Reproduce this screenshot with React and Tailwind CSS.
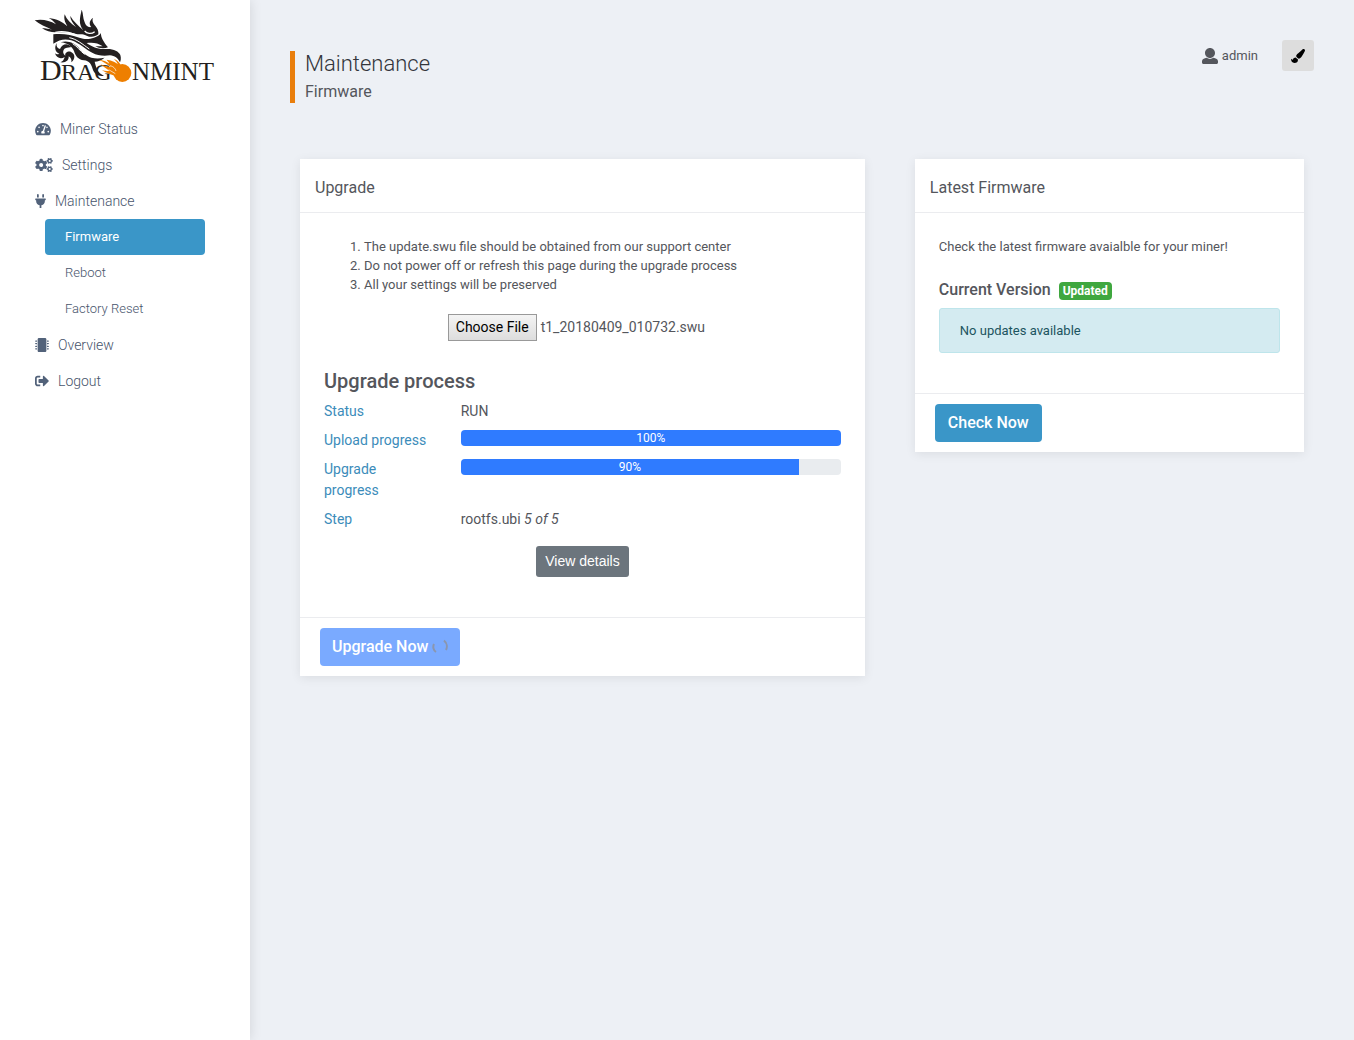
import { useState } from "react";
import {
  FaCogs,
  FaMicrochip,
  FaPaintBrush,
  FaPlug,
  FaSignOutAlt,
  FaTachometerAlt,
} from "react-icons/fa";

const menu = [
  { label: "Miner Status", icon: FaTachometerAlt, size: "h-3.5 w-4" },
  { label: "Settings", icon: FaCogs, size: "h-3.5 w-[18px]" },
  {
    label: "Maintenance",
    icon: FaPlug,
    size: "h-3.5 w-[11px]",
    children: ["Firmware", "Reboot", "Factory Reset"],
  },
  { label: "Overview", icon: FaMicrochip, size: "size-3.5" },
  { label: "Logout", icon: FaSignOutAlt, size: "size-3.5" },
];

function Logo() {
  return (
    <svg viewBox="0 0 182 76" className="w-[182px]" role="img" aria-label="Dragonmint">
      <g transform="translate(-4 -5) scale(0.3333)" fill="#231f20">
        {/* mane */}
        <path d="M14 46 C36 42 58 46 78 58 C72 50 66 44 56 39 C80 42 98 50 112 64 C104 50 101 42 104 28 C110 44 122 56 138 66 C128 54 120 44 121 33 C130 50 146 62 160 76 C144 56 150 38 155 14 C160 24 158 38 164 52 C167 62 174 68 184 66 C176 58 178 46 189 38 C185 48 190 56 197 64 C203 72 206 78 205 88 C196 96 182 98 170 92 C156 84 148 90 136 86 C118 80 96 82 76 82 C62 82 48 78 36 70 C48 70 56 72 66 74 C48 66 28 58 14 46Z" />
        {/* brow and forehead */}
        <path d="M70 88 C98 84 124 90 148 98 C166 104 178 102 192 98 C202 95 210 90 213 84 C212 98 222 112 234 127 C222 132 206 130 196 124 L218 124 C204 112 184 112 170 114 C184 124 204 134 226 132 C248 130 266 138 271 150 C274 160 272 168 270 172 C264 160 254 152 240 151 C222 154 202 152 188 144 C166 134 152 116 124 106 C104 100 88 104 70 116 Z" />
        {/* jaw */}
        <path d="M92 112 C112 104 134 114 146 128 C158 144 168 152 184 158 C200 162 212 160 224 158 C214 166 204 170 194 170 C198 186 202 204 222 212 C206 216 192 206 188 192 C184 178 178 168 162 166 C144 164 136 152 132 138 C126 124 112 114 92 112Z" />
        {/* beard curls */}
        <path d="M124 126 C112 112 96 118 90 132 C82 130 78 124 80 114 C72 128 76 142 88 146 C82 149 78 148 75 144 C78 158 92 164 104 156 C102 164 98 170 91 172 C108 174 117 166 116 154 C122 158 126 164 124 172 C137 162 136 146 122 140 C112 138 104 144 106 152 C97 146 98 134 106 130 C112 127 120 128 124 126Z" />
        <path
          d="M76 82 C104 76 126 84 152 96 M164 78 C170 86 184 88 194 80"
          fill="none"
          stroke="#fff"
          strokeWidth="4"
        />
        <path
          d="M118 98 C140 102 158 118 178 132 M128 116 C142 124 150 138 164 148"
          fill="none"
          stroke="#fff"
          strokeWidth="3"
        />
      </g>
      <g fill="#231f20" fontFamily="Liberation Serif, serif">
        <text x="6" y="70" fontSize="30">D</text>
        <text x="27" y="70" fontSize="24">RAG</text>
        <text x="98" y="70" fontSize="25">NMINT</text>
      </g>
      <g transform="translate(-4 -5) scale(0.3333)" fill="#ee7f00">
        <circle cx="277" cy="204" r="27" />
        <path d="M206 165 C220 165 230 170 238 176 C236 170 232 168 230 164 C246 166 262 174 272 184 L258 214 C244 208 230 206 216 196 C226 198 234 198 238 197 C228 190 220 186 212 178 C224 184 236 186 242 186 C230 176 220 170 206 165Z" />
        <path d="M252 162 C262 166 268 172 272 180 L264 180 C262 172 258 168 252 162Z" />
        <path d="M240 182 C250 184 256 190 258 198 M236 194 C244 198 248 202 256 206" fill="none" stroke="#fff" strokeWidth="2" />
      </g>
    </svg>
  );
}

function UserIcon() {
  return (
    <svg viewBox="0 0 512 512" className="size-4" fill="currentColor" aria-hidden="true">
      <path d="M256 0c88.366 0 160 71.634 160 160s-71.634 160-160 160S96 248.366 96 160 167.634 0 256 0zm183.283 333.821l-71.313-17.828c-74.923 53.89-165.738 41.864-223.94 0l-71.313 17.828C29.981 344.505 0 382.903 0 426.955V464c0 26.51 21.49 48 48 48h416c26.51 0 48-21.49 48-48v-37.045c0-44.052-29.981-82.45-72.717-93.134z" />
    </svg>
  );
}

function Sidebar() {
  return (
    <aside className="w-[250px] shrink-0 bg-white shadow-[0_0_12px_rgba(0,0,0,0.12)]">
      <a href="#home" className="block px-[34px] pt-[10px] pb-[25px]">
        <Logo />
      </a>
      <nav className="text-sm font-light text-[#47546b]">
        <ul>
          {menu.map(({ label, icon: Icon, size, children }) => (
            <li key={label}>
              <a href="#menu" className="flex h-9 items-center gap-[9px] pl-[35px]">
                <Icon className={`${size} text-[#52627a]`} />
                {label}
              </a>
              {children && (
                <ul className="px-[45px] text-[13px]">
                  {children.map((child) => (
                    <li key={child}>
                      <a
                        href="#submenu"
                        className={
                          child === "Firmware"
                            ? "flex h-9 items-center rounded bg-[#3a96c8] pl-5 font-normal text-white"
                            : "flex h-9 items-center pl-5"
                        }
                      >
                        {child}
                      </a>
                    </li>
                  ))}
                </ul>
              )}
            </li>
          ))}
        </ul>
      </nav>
    </aside>
  );
}

function Card({ title, footer, children }) {
  return (
    <section className="bg-white shadow-[0_2px_10px_rgba(0,0,0,0.08)]">
      <h3 className="border-b border-[#ebecef] px-[15px] pt-4 pb-3 text-base/[25px]">{title}</h3>
      <div className="px-6 pt-6 pb-10">{children}</div>
      <div className="border-t border-[#ebecef] px-5 py-[10px]">{footer}</div>
    </section>
  );
}

function Row({ label, children }) {
  return (
    <div className="mb-2 flex">
      <dt className="w-1/4 shrink-0 px-[15px] text-[#3c8cba]">{label}</dt>
      <dd className="w-3/4 px-[15px]">{children}</dd>
    </div>
  );
}

function Progress({ label, value, fill }) {
  return (
    <div
      role="progressbar"
      aria-label={label}
      aria-valuenow={value}
      className="h-4 overflow-hidden rounded bg-[#e9ecef] text-xs/4"
    >
      <div className="h-full bg-[#2f7bff] text-center text-white" style={{ width: `${fill}%` }}>
        {value}%
      </div>
    </div>
  );
}

// ring with two gaps, shown while the upgrade is running
function Spinner() {
  return (
    <svg viewBox="0 0 16 16" className="size-4" fill="none" stroke="#8b96ae" strokeWidth="2">
      <path d="M2 5 C0.5 8 1.5 11.5 4 13" />
      <path d="M12 1.5 C15 4 15.5 8 14 11" />
    </svg>
  );
}

export default function App() {
  const [fileName, setFileName] = useState("t1_20180409_010732.swu");

  return (
    <div className="flex min-h-screen bg-[#edf0f5] font-[Roboto,sans-serif] text-[13px]/[19px] text-[#54565c]">
      <Sidebar />

      <main className="min-w-0 flex-1 px-[25px] pt-10">
        <header className="flex items-start justify-between px-[15px]">
          <div className="mt-[11px] border-l-5 border-[#e97e0c] pl-[10px]">
            <h1 className="text-[22px]/[26px] font-light text-[#33353b]">Maintenance</h1>
            <h2 className="mt-1 text-base/[22px]">Firmware</h2>
          </div>
          <div className="flex items-center gap-6">
            <a href="#user" className="flex items-center gap-1">
              <UserIcon />
              admin
            </a>
            <button
              type="button"
              aria-label="Theme"
              className="flex h-[31px] w-8 items-center justify-center rounded-[3px] bg-[#dddddd] text-black"
            >
              <FaPaintBrush className="size-3.5" />
            </button>
          </div>
        </header>

        <div className="mt-14 flex items-start">
          <div className="w-7/12 px-[25px]">
            <Card
              title="Upgrade"
              footer={
                <button
                  type="button"
                  disabled
                  className="flex h-[38px] items-center gap-1 rounded bg-[#7aaaff] px-3 text-base font-medium text-white"
                >
                  Upgrade Now
                  <Spinner />
                </button>
              }
            >
              <ol className="mb-5 list-decimal pl-10">
                <li>The update.swu file should be obtained from our support center</li>
                <li>Do not power off or refresh this page during the upgrade process</li>
                <li>All your settings will be preserved</li>
              </ol>

              <div className="flex items-center justify-center gap-1 pr-3 text-sm/[19px]">
                <label
                  htmlFor="firmware"
                  className="border border-[#999999] bg-linear-to-b from-[#f4f4f4] to-[#dddddd] px-[7px] py-[3px] text-black"
                >
                  Choose File
                </label>
                <input
                  id="firmware"
                  type="file"
                  className="sr-only"
                  onChange={(e) => setFileName(e.target.files[0]?.name ?? "")}
                />
                <span>{fileName}</span>
              </div>

              <h4 className="mt-7 mb-2 text-xl/6 font-medium">Upgrade process</h4>
              <dl className="-mx-[15px] text-sm/[21px]">
                <Row label="Status">RUN</Row>
                <Row label="Upload progress">
                  <Progress label="Upload progress" value={100} fill={100} />
                </Row>
                <Row label="Upgrade progress">
                  <Progress label="Upgrade progress" value={90} fill={89} />
                </Row>
                <Row label="Step">
                  rootfs.ubi <em>5 of 5</em>
                </Row>
              </dl>
              <div className="mt-4 text-center">
                <button
                  type="button"
                  className="rounded-[3px] bg-[#6c757d] px-[9px] py-[5px] font-['Liberation_Sans',sans-serif] text-sm/[21px] text-white"
                >
                  View details
                </button>
              </div>
            </Card>
          </div>

          <div className="w-5/12 px-[25px]">
            <Card
              title="Latest Firmware"
              footer={
                <button
                  type="button"
                  className="h-[38px] rounded bg-[#3a96c8] px-[13px] text-base font-medium text-white"
                >
                  Check Now
                </button>
              }
            >
              <p className="mb-6">Check the latest firmware avaialble for your miner!</p>
              <h4 className="mb-2 flex items-end gap-2 text-base/5 font-medium">
                Current Version
                <span className="rounded bg-[#3fa73f] px-1 text-xs/[18px] font-bold text-white">
                  Updated
                </span>
              </h4>
              <div className="rounded-[3px] border border-[#bee5eb] bg-[#d4ebf1] px-5 py-3 text-[#1c5460]">
                No updates available
              </div>
            </Card>
          </div>
        </div>
      </main>
    </div>
  );
}
